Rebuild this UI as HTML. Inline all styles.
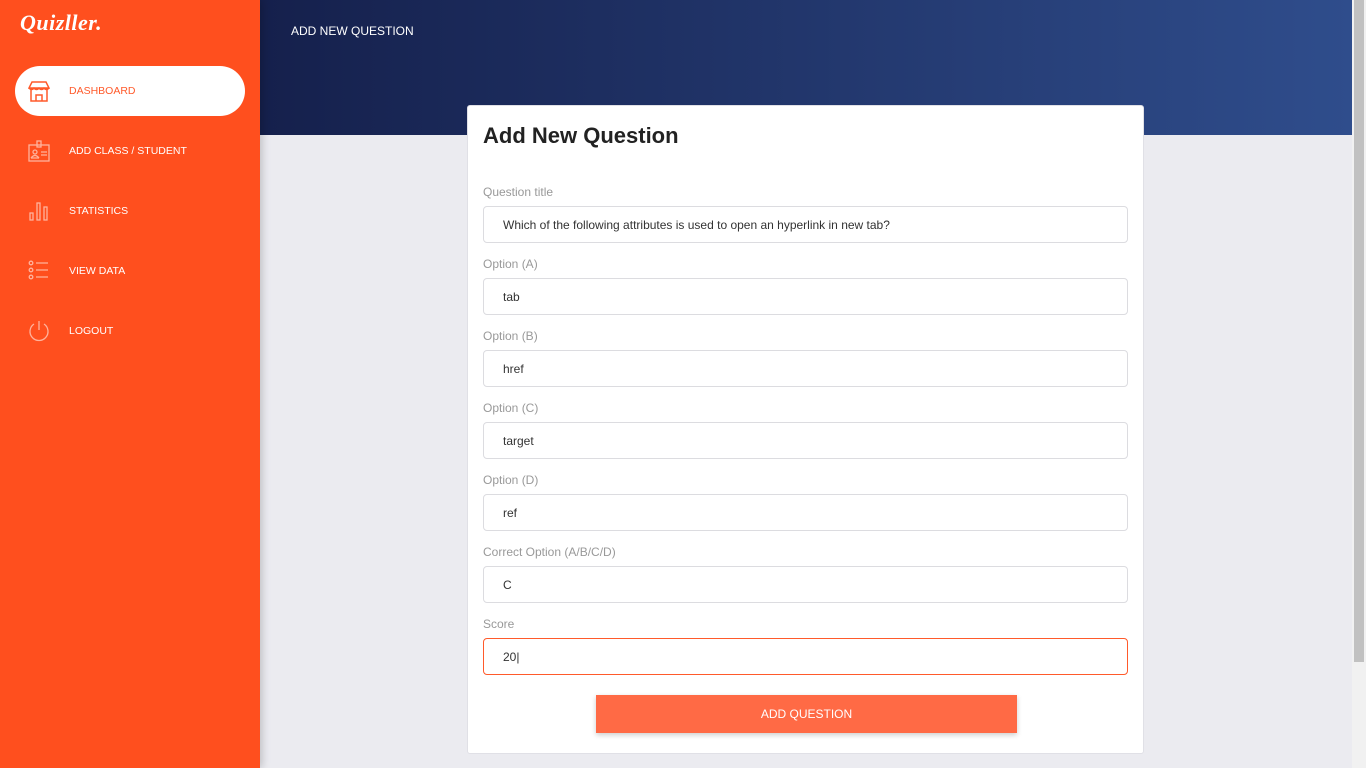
<!DOCTYPE html>
<html><head><style>
*{box-sizing:border-box;margin:0;padding:0}
body{width:1366px;height:768px;overflow:hidden;background:#ebebf0;font-family:"Liberation Sans",sans-serif;position:relative}
.side{position:absolute;left:0;top:0;width:260px;height:768px;background:#ff4f1e;box-shadow:2px 0 8px rgba(0,0,0,.2);z-index:2}
.logo{position:absolute;left:20px;top:10px;color:#fff;font:italic bold 22px "Liberation Serif",serif;letter-spacing:.5px}
.nav{position:absolute;left:15px;width:230px;height:50px;color:#fff;font-size:10.5px;display:flex;align-items:center}
.nav.act{background:#fff;border-radius:25px;color:#ff5a2b}
.nav svg{position:absolute;left:13px;top:14px}
.nav span{position:absolute;left:54px}
.head{position:absolute;left:260px;top:0;width:1092px;height:135px;background:linear-gradient(90deg,#15204c,#2f4d8c)}
.head span{position:absolute;left:31px;top:24px;color:#fff;font-size:12px}
.scroll{position:absolute;right:0;top:0;width:14px;height:768px;background:#f1f1f1}
.scroll div{position:absolute;left:2px;top:0;width:10px;height:662px;background:#c1c1c1}
.card{position:absolute;left:467px;top:105px;width:677px;height:649px;background:#fff;border:1px solid #e0e0e6;border-radius:3px}
h1{position:absolute;left:15px;top:17px;font-size:22px;color:#222;font-weight:bold}
.lab{position:absolute;left:15px;font-size:12px;color:#999}
.inp{position:absolute;left:15px;width:645px;height:37px;border:1px solid #dcdce0;border-radius:4px;font-size:12px;color:#333;padding:11px 0 0 19px}
.inp.f{border-color:#ff5a2b}
.btn{position:absolute;left:128px;top:589px;width:421px;height:38px;background:#ff6a45;color:#fff;font-size:12px;text-align:center;line-height:38px;box-shadow:0 2px 5px rgba(0,0,0,.2)}
</style></head><body>
<div class="side">
<div class="logo">Quizller.</div>
<div class="nav act" style="top:66px"><svg width="22" height="22" viewBox="0 0 22 22" fill="none" stroke="#ff5a2b" stroke-width="1.5"><path d="M4 2h14l3 6H1z M1 8q2.5 3 5 0q2.5 3 5 0q2.5 3 5 0q2.5 3 5 0 M3 10v11h16V10 M8 21v-6h6v6"/></svg><span>DASHBOARD</span></div>
<div class="nav" style="top:126px"><svg width="22" height="22" viewBox="0 0 22 22" fill="none" stroke="#ffb29c" stroke-width="1.3"><rect x="1" y="5" width="20" height="16"/><rect x="9" y="1" width="4" height="6"/><circle cx="7" cy="12" r="2"/><path d="M3 18q4-5 8 0 M13 12h6 M13 15h6 M3 18h8"/></svg><span>ADD CLASS / STUDENT</span></div>
<div class="nav" style="top:186px"><svg width="22" height="22" viewBox="0 0 22 22" fill="none" stroke="#ffb29c" stroke-width="1.3"><rect x="2" y="13" width="3" height="7"/><rect x="9" y="3" width="3" height="17"/><rect x="16" y="7" width="3" height="13"/></svg><span>STATISTICS</span></div>
<div class="nav" style="top:246px"><svg width="22" height="22" viewBox="0 0 22 22" fill="none" stroke="#ffb29c" stroke-width="1.3"><circle cx="3" cy="3" r="1.8"/><circle cx="3" cy="10" r="1.8"/><circle cx="3" cy="17" r="1.8"/><path d="M8 3h12 M8 10h12 M8 17h12"/></svg><span>VIEW DATA</span></div>
<div class="nav" style="top:306px"><svg width="22" height="22" viewBox="0 0 22 22" fill="none" stroke="#ffb29c" stroke-width="1.3"><path d="M11 1v9 M6 4a9 9 0 1 0 10 0"/></svg><span>LOGOUT</span></div>
</div>
<div class="head"><span>ADD NEW QUESTION</span></div>
<div class="scroll"><div></div></div>
<div class="card">
<h1>Add New Question</h1>
<div class="lab" style="top:79px">Question title</div><div class="inp" style="top:100px">Which of the following attributes is used to open an hyperlink in new tab?</div>
<div class="lab" style="top:151px">Option (A)</div><div class="inp" style="top:172px">tab</div>
<div class="lab" style="top:223px">Option (B)</div><div class="inp" style="top:244px">href</div>
<div class="lab" style="top:295px">Option (C)</div><div class="inp" style="top:316px">target</div>
<div class="lab" style="top:367px">Option (D)</div><div class="inp" style="top:388px">ref</div>
<div class="lab" style="top:439px">Correct Option (A/B/C/D)</div><div class="inp" style="top:460px">C</div>
<div class="lab" style="top:511px">Score</div><div class="inp f" style="top:532px">20|</div>
<div class="btn">ADD QUESTION</div>
</div>
</body></html>
